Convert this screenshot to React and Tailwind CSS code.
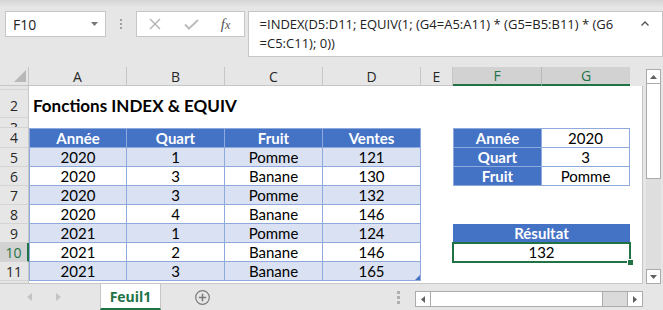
import React from "react";

const ui = "font-['Open_Sans',sans-serif]";
const cellFont = "font-['Lato',sans-serif]";

const data = [
  ["2020", "1", "Pomme", "121"],
  ["2020", "3", "Banane", "130"],
  ["2020", "3", "Pomme", "132"],
  ["2020", "4", "Banane", "146"],
  ["2021", "1", "Pomme", "124"],
  ["2021", "2", "Banane", "146"],
  ["2021", "3", "Banane", "165"],
];

// right hand block, rows 5..11
const side = [
  { f: "Quart", g: "3" },
  { f: "Fruit", g: "Pomme" },
  null,
  null,
  { merged: "Résultat" },
  { merged: "132", selected: true },
  null,
];

const colW = ["w-[98px]", "w-[98px]", "w-[98px]", "w-[98px]"];

function RowHead({ n, h, active, align = "items-center" }) {
  return (
    <div
      className={`w-[29px] shrink-0 ${h} flex justify-center ${align} overflow-hidden border-b border-[#d4d4d4] ${
        active
          ? "bg-[#d2d2d2] text-[#217346] border-r-2 border-r-[#217346]"
          : "bg-[#e6e6e6] text-[#262626] border-r border-r-[#c6c6c6]"
      } ${ui} text-[14px] leading-[19px]`}
    >
      {n}
    </div>
  );
}

function TopBar() {
  return (
    <div className="h-[67px] shrink-0 flex items-start pt-[11px] pl-[5px] bg-[linear-gradient(#d4d4d4,#e6e6e6_7px)]">
      {/* name box */}
      <div className={`w-[102px] h-[26px] bg-white border border-[#c6c6c6] flex items-center justify-between pl-[7px] pr-[7px] ${ui} text-[14px] text-[#222]`}>
        <span>F10</span>
        <svg width="7" height="4" viewBox="0 0 7 4">
          <path d="M0 0H7L3.5 4Z" fill="#777" />
        </svg>
      </div>
      <div className="w-[30px] h-[26px] flex flex-col items-center justify-center gap-[2px]">
        <div className="w-[2px] h-[2px] bg-[#a0a0a0]" />
        <div className="w-[2px] h-[2px] bg-[#a0a0a0]" />
        <div className="w-[2px] h-[2px] bg-[#a0a0a0]" />
      </div>
      {/* cancel / enter / fx */}
      <div className="w-[110px] h-[26px] bg-white border border-[#c6c6c6] flex items-center">
        <svg className="ml-[12px]" width="12" height="12" viewBox="0 0 12 12">
          <path d="M1 1L11 11M11 1L1 11" stroke="#b0b0b0" strokeWidth="1.3" />
        </svg>
        <svg className="ml-[23px]" width="15" height="11" viewBox="0 0 15 11">
          <path d="M1 5.5L5 9.5L14 1" stroke="#bdbdbd" strokeWidth="2" fill="none" />
        </svg>
        <span className="ml-[22px] font-['Liberation_Serif',serif] italic text-[15px] text-[#555] leading-none">
          f<span className="text-[12px]">x</span>
        </span>
      </div>
      {/* formula */}
      <div className={`ml-[3px] w-[420px] h-[46px] bg-white border border-[#c6c6c6] flex ${ui} text-[13px] text-[#222] leading-[19px]`}>
        <div className="pl-[11px] pt-[3px] whitespace-nowrap">
          <div>=INDEX(D5:D11; EQUIV(1; (G4=A5:A11) * (G5=B5:B11) * (G6</div>
          <div>=C5:C11); 0))</div>
        </div>
        <svg className="ml-[28px] mt-[9px]" width="8" height="5" viewBox="0 0 8 5">
          <path d="M0.5 4.5L4 1L7.5 4.5" stroke="#555" strokeWidth="1.4" fill="none" />
        </svg>
      </div>
    </div>
  );
}

function ColHeaders() {
  const letters = [
    ["A", "w-[98px]"],
    ["B", "w-[98px]"],
    ["C", "w-[98px]"],
    ["D", "w-[98px]"],
    ["E", "w-[32px]"],
  ];
  return (
    <div className={`flex h-[19px] shrink-0 ${ui} text-[14px] text-[#262626]`}>
      <div className="w-[29px] h-full border-r border-b border-[#c6c6c6] flex items-end justify-end pr-[2px] pb-[3px]">
        <svg width="12" height="12" viewBox="0 0 12 12">
          <path d="M12 0V12H0Z" fill="#b8b8b8" />
        </svg>
      </div>
      {letters.map(([l, w]) => (
        <div key={l} className={`${w} h-full border-r border-b border-[#c6c6c6] flex items-center justify-center`}>
          {l}
        </div>
      ))}
      <div className="w-[89px] h-full bg-[#d2d2d2] border-r border-[#b8b8b8] border-b-2 border-b-[#217346] text-[#217346] flex items-center justify-center">
        F
      </div>
      <div className="w-[88px] h-full bg-[#d2d2d2] border-b-2 border-b-[#217346] text-[#217346] flex items-center justify-center">
        G
      </div>
    </div>
  );
}

function DataRow({ i, vals, right }) {
  const n = i + 5;
  const band = i % 2 === 0 ? "bg-[#d9e1f2]" : "bg-white";
  return (
    <div className="flex h-[19px] shrink-0">
      <RowHead n={n} h="h-[19px]" active={n === 10} />
      {vals.map((v, k) => (
        <div
          key={k}
          className={`${colW[k]} ${band} border-r border-b border-[#8ea9db] ${k === 0 ? "border-l" : ""} flex items-center justify-center ${
            k === 3 && n === 11 ? "relative" : ""
          }`}
        >
          {v}
          {k === 3 && n === 11 && (
            <svg className="absolute right-0 bottom-0" width="5" height="5" viewBox="0 0 5 5">
              <path d="M5 0V5H0Z" fill="#4472c4" />
            </svg>
          )}
        </div>
      ))}
      <div className="w-[32px]" />
      {right && right.f && (
        <>
          <div className="w-[89px] bg-[#4472c4] text-white font-bold border-l border-r border-b border-[#8ea9db] flex items-center justify-center">
            {right.f}
          </div>
          <div className="w-[88px] bg-white border-r border-b border-[#8ea9db] flex items-center justify-center">
            {right.g}
          </div>
        </>
      )}
      {right && right.merged && !right.selected && (
        <div className="w-[177px] bg-[#4472c4] text-white font-bold flex items-center justify-center">
          {right.merged}
        </div>
      )}
      {right && right.selected && (
        <div className="w-[177px] relative bg-white outline-2 outline-[#217346] -outline-offset-1 flex items-center justify-center">
          {right.merged}
          <div className="absolute right-[-4px] bottom-[-4px] w-[7px] h-[7px] bg-[#217346] border border-white" />
        </div>
      )}
    </div>
  );
}

function Sheet() {
  return (
    <div className="w-[643px] flex flex-col">
      <ColHeaders />
      <div className={`flex-1 flex flex-col bg-white border-r border-b border-[#c6c6c6] ${cellFont} text-[15px] text-black`}>
        <div className="flex h-[4px] shrink-0">
          <RowHead n={1} h="h-[4px]" align="items-end" />
        </div>
        <div className="flex h-[28px] shrink-0">
          <RowHead n={2} h="h-[28px]" align="items-end pb-[2px]" />
          <div className="pl-[4px] pb-[1px] flex items-end text-[17px] font-bold leading-[22px]">
            Fonctions INDEX &amp; EQUIV
          </div>
        </div>
        <div className="flex h-[10px] shrink-0">
          <RowHead n={3} h="h-[10px]" align="items-start" />
        </div>
        {/* row 4 headers */}
        <div className="flex h-[20px] shrink-0">
          <RowHead n={4} h="h-[20px]" />
          {["Année", "Quart", "Fruit", "Ventes"].map((t, k) => (
            <div
              key={t}
              className={`${colW[k]} bg-[#4472c4] text-white font-bold border-t border-r border-b border-[#8ea9db] ${k === 0 ? "border-l" : ""} flex items-center justify-center`}
            >
              {t}
            </div>
          ))}
          <div className="w-[32px]" />
          <div className="w-[89px] bg-[#4472c4] text-white font-bold border border-[#8ea9db] flex items-center justify-center">
            Année
          </div>
          <div className="w-[88px] bg-white border-t border-r border-b border-[#8ea9db] flex items-center justify-center">
            2020
          </div>
        </div>
        {data.map((vals, i) => (
          <DataRow key={i} i={i} vals={vals} right={side[i]} />
        ))}
        <div className="flex flex-1">
          <div className="w-[29px] bg-[#e6e6e6] border-r border-[#c6c6c6]" />
        </div>
      </div>
    </div>
  );
}

function VScroll() {
  return (
    <div className="ml-[3px] mt-[2px] w-[15px] h-[215px] flex flex-col bg-[#dedede]">
      <div className="h-[15px] bg-white border border-[#ababab] flex items-center justify-center">
        <svg width="7" height="4" viewBox="0 0 7 4">
          <path d="M0 4H7L3.5 0Z" fill="#606060" />
        </svg>
      </div>
      <div className="h-[95px] bg-white border-x border-b border-[#ababab]" />
      <div className="flex-1" />
      <div className="h-[15px] bg-white border border-[#ababab] flex items-center justify-center">
        <svg width="7" height="4" viewBox="0 0 7 4">
          <path d="M0 0H7L3.5 4Z" fill="#606060" />
        </svg>
      </div>
    </div>
  );
}

function BottomBar() {
  return (
    <div className="h-[26px] shrink-0 flex items-stretch">
      <div className="w-[100px] flex items-center">
        <svg className="ml-[27px]" width="5" height="8" viewBox="0 0 5 8">
          <path d="M5 0V8L0 4Z" fill="#c4c4c4" />
        </svg>
        <svg className="ml-[24px]" width="5" height="8" viewBox="0 0 5 8">
          <path d="M0 0V8L5 4Z" fill="#c4c4c4" />
        </svg>
      </div>
      <div className={`w-[61px] bg-white border-x border-[#c6c6c6] border-b-2 border-b-[#217346] flex items-center justify-center ${ui} font-bold text-[14px] text-[#217346]`}>
        Feuil1
      </div>
      <div className="ml-[34px] flex items-center">
        <svg width="15" height="15" viewBox="0 0 15 15">
          <circle cx="7.5" cy="7.5" r="6.8" stroke="#7a7a7a" strokeWidth="1.2" fill="none" />
          <path d="M7.5 3.8V11.2M3.8 7.5H11.2" stroke="#7a7a7a" strokeWidth="1.5" />
        </svg>
      </div>
      <div className="ml-[187px] flex flex-col justify-center gap-[2px]">
        <div className="w-[3px] h-[3px] bg-[#b0b0b0]" />
        <div className="w-[3px] h-[3px] bg-[#b0b0b0]" />
        <div className="w-[3px] h-[3px] bg-[#b0b0b0]" />
      </div>
      <div className="ml-[15px] mt-[7px] w-[228px] h-[16px] flex border border-[#ababab] bg-[#dadada]">
        <div className="w-[15px] bg-white border-r border-[#ababab] flex items-center justify-center">
          <svg width="4" height="7" viewBox="0 0 4 7">
            <path d="M4 0V7L0 3.5Z" fill="#606060" />
          </svg>
        </div>
        <div className="w-[172px] bg-white border-r border-[#ababab]" />
        <div className="flex-1" />
        <div className="w-[15px] bg-white border-l border-[#ababab] flex items-center justify-center">
          <svg width="4" height="7" viewBox="0 0 4 7">
            <path d="M0 0V7L4 3.5Z" fill="#606060" />
          </svg>
        </div>
      </div>
    </div>
  );
}

export default function App() {
  return (
    <div className="w-[663px] h-[310px] overflow-hidden bg-[#e6e6e6] flex flex-col">
      <TopBar />
      <div className="flex h-[217px] shrink-0">
        <Sheet />
        <VScroll />
      </div>
      <BottomBar />
    </div>
  );
}
